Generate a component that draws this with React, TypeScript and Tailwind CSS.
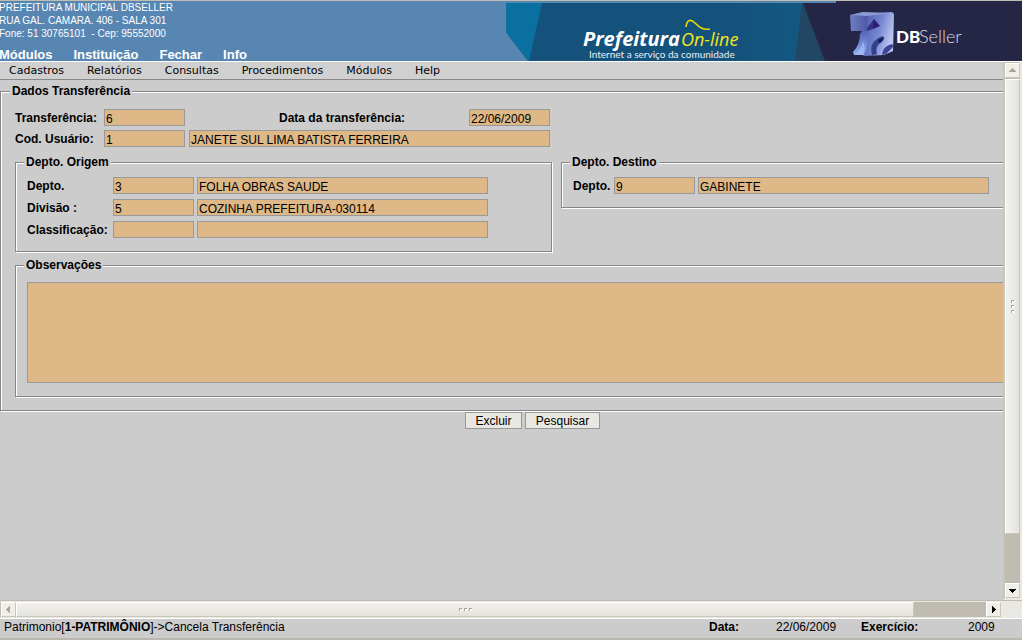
import type { ReactNode } from "react";

const etched =
  "border border-[#868686] shadow-[inset_1px_1px_0_#fff,1px_1px_0_#fff] min-w-0";
const legendStyle = "bg-[#cccccc] px-[2px] text-[12px] leading-[14px] font-bold";
const inputBase =
  "block h-[17px] border border-[#999999] bg-[#deb887] px-px pt-[2px] text-[12px] leading-[14px] text-black outline-none";

function Group({ title, className, children }: { title: string; className: string; children: ReactNode }) {
  return (
    <fieldset className={`${etched} ${className}`}>
      <legend className={legendStyle}>{title}</legend>
      {children}
    </fieldset>
  );
}

function Code({ id, value }: { id: string; value: string }) {
  return <input id={id} className={`${inputBase} w-[81px]`} defaultValue={value} readOnly />;
}

function Description({ label, value, className }: { label: string; value: string; className: string }) {
  return <input aria-label={label} className={`${inputBase} ${className}`} defaultValue={value} readOnly />;
}

function Label({ htmlFor, className, children }: { htmlFor: string; className?: string; children: ReactNode }) {
  return (
    <label htmlFor={htmlFor} className={`h-[17px] shrink-0 text-[12px] leading-[19px] font-bold whitespace-nowrap ${className ?? ""}`}>
      {children}
    </label>
  );
}

function Banner() {
  return (
    <svg className="block h-[60px] w-[516px] shrink-0" viewBox="0 0 516 60" role="img" aria-label="Prefeitura On-line - DBSeller">
      <defs>
        <linearGradient id="sea" x1="0" x2="1">
          <stop offset="0.7" stopColor="#14527b" />
          <stop offset="1" stopColor="#135b86" />
        </linearGradient>
        <linearGradient id="face" x1="0" y1="0" x2="1" y2="0.4">
          <stop offset="0" stopColor="#4a58a8" />
          <stop offset="0.6" stopColor="#7788d2" />
          <stop offset="1" stopColor="#b9c6f0" />
        </linearGradient>
        <linearGradient id="base" x1="0" y1="0" x2="0" y2="1">
          <stop offset="0" stopColor="#4a5ab0" />
          <stop offset="1" stopColor="#93b0ee" />
        </linearGradient>
        <linearGradient id="lid" x1="0" x2="1">
          <stop offset="0" stopColor="#7080c4" />
          <stop offset="1" stopColor="#4a56a2" />
        </linearGradient>
      </defs>
      <path d="M0 2H330V60H22L0 31Z" fill="url(#sea)" />
      <path d="M0 2H36L23 60H22L0 31Z" fill="#0a70a0" />
      <path d="M296 2H303L325 60H289Z" fill="#224765" />
      <path d="M297 2H330V0H516V60H319Z" fill="#252545" />
      <text x="77" y="45" fill="#fff" fontFamily="'Open Sans', sans-serif" fontStyle="italic" fontWeight="700" fontSize="20">
        Prefeitura
      </text>
      <text x="175" y="45" fill="#f5e616" fontFamily="'Open Sans', sans-serif" fontStyle="italic" fontSize="18">
        On-line
      </text>
      <path d="M180 26C181 18 185 18 189 22C194 27 197 29 204 28" fill="none" stroke="#f0d800" strokeWidth="1.6" />
      <text x="83" y="57" fill="#e8f0f6" fontFamily="Lato, sans-serif" fontSize="10">
        Internet a serviço da comunidade
      </text>
      <path d="M358 27L371 30L366 54L348 54L347 51Q354 44 354 33Z" fill="url(#base)" />
      <path d="M357 13L386 11L388 13L387 50L378 54L357 55Q364 44 360 30Z" fill="url(#face)" />
      <path d="M344 14L357 11L362 13L361 30L345 30Z" fill="url(#lid)" />
      <path d="M345 14L357 11L387 12L361 15Z" fill="#8b9ad6" />
      <path d="M368 18L374 25L367 28L362 27Z" fill="#2b1f70" />
      <path d="M361 27L368 18L367 28L361 30Z" fill="#392f8b" />
      <path d="M366 54Q363 43 371 38Q377 33 378 37Q377 41 373 43Q369 47 371 53Z" fill="#35408a" />
      <path d="M372 39L378 36L377 39L373 42Z" fill="#151a50" />
      <path d="M376 54Q377 46 383 44Q388 42 387 46L380 53Z" fill="#3b4594" />
      <path d="M349 53Q356 48 357 40Q360 48 357 54Z" fill="#a6bdf5" opacity="0.7" />
      <text x="390" y="42" fill="#fff" fontFamily="Lato, sans-serif" fontWeight="900" fontSize="17">
        DB
      </text>
      <text x="413" y="42" fill="#dcdce8" fontFamily="Lato, sans-serif" fontWeight="300" fontSize="18">
        Seller
      </text>
    </svg>
  );
}

const bevel = "border border-t-white border-l-white border-r-[#c9c5b9] border-b-[#c9c5b9] bg-[#efeee9]";

function Arrow({ d, label, fill }: { d: string; label: string; fill: string }) {
  return (
    <button type="button" aria-label={label} className={`flex size-[15px] shrink-0 items-center justify-center ${bevel}`}>
      <svg className="size-[9px]" viewBox="0 0 9 9" shapeRendering="crispEdges" aria-hidden="true">
        <path d={d} fill={fill} />
      </svg>
    </button>
  );
}

function Grip() {
  return (
    <>
      {[0, 1, 2].map((dot) => (
        <i key={dot} className="size-[3px] border-t border-l border-[#a9a493] bg-white" />
      ))}
    </>
  );
}

export default function App() {
  return (
    <div className="flex h-screen flex-col overflow-hidden bg-[#cccccc] font-['Liberation_Sans',Arial,sans-serif] text-black">
      <header className="flex shrink-0 justify-between border-t border-b border-t-[#c0bdb2] border-b-white bg-[#5786b2] text-white">
        <div className="-ml-px flex flex-col justify-between whitespace-nowrap">
          <address className="text-[10px] leading-[13px] not-italic">
            PREFEITURA MUNICIPAL DBSELLER
            <br />
            RUA GAL. CAMARA. 406 - SALA 301
            <br />
            Fone: 51 30765101 &nbsp;- Cep: 95552000
          </address>
          <nav className="flex gap-[21px] text-[13px] leading-[12px] font-bold">
            <a href="#modulos">Módulos</a>
            <a href="#instituicao">Instituição</a>
            <a href="#fechar">Fechar</a>
            <a href="#info">Info</a>
          </nav>
        </div>
        <Banner />
      </header>

      <div className="flex min-h-0 flex-1">
        <div className="flex min-w-0 flex-1 flex-col overflow-hidden">
          <nav className="flex h-[18px] shrink-0 gap-[23px] border-b border-[#888888] bg-[#d0d0d0] pl-[9px] font-['DejaVu_Sans',sans-serif] text-[11px] leading-[17px]">
            <a href="#cadastros">Cadastros</a>
            <a href="#relatorios">Relatórios</a>
            <a href="#consultas">Consultas</a>
            <a href="#procedimentos">Procedimentos</a>
            <a href="#menu-modulos">Módulos</a>
            <a href="#help">Help</a>
          </nav>

          <form className="min-w-[1065px] pt-1" onSubmit={(e) => e.preventDefault()}>
            <Group title="Dados Transferência" className="px-[14px] pb-[13px] [&>legend]:-ml-[5px]">
              <div className="flex flex-col gap-1 pt-[11px]">
                <div className="flex">
                  <Label htmlFor="transferencia" className="w-[89px]">Transferência:</Label>
                  <Code id="transferencia" value="6" />
                  <Label htmlFor="data" className="ml-[94px] w-[190px]">Data da transferência:</Label>
                  <Code id="data" value="22/06/2009" />
                </div>
                <div className="flex">
                  <Label htmlFor="usuario" className="w-[89px]">Cod. Usuário:</Label>
                  <Code id="usuario" value="1" />
                  <Description label="Nome do usuário" value="JANETE SUL LIMA BATISTA FERREIRA" className="ml-1 w-[361px]" />
                </div>
              </div>

              <div className="mt-2 flex items-start gap-[9px]">
                <Group title="Depto. Origem" className="w-[537px] px-[11px] pb-[13px] [&>legend]:-ml-[3px]">
                  <div className="flex flex-col gap-[5px] pt-2">
                    <div className="flex gap-[3px]">
                      <Label htmlFor="depto-origem" className="w-[83px]">Depto.</Label>
                      <Code id="depto-origem" value="3" />
                      <Description label="Nome do departamento de origem" value="FOLHA OBRAS SAUDE" className="w-[291px]" />
                    </div>
                    <div className="flex gap-[3px]">
                      <Label htmlFor="divisao" className="w-[83px]">Divisão :</Label>
                      <Code id="divisao" value="5" />
                      <Description label="Nome da divisão" value="COZINHA PREFEITURA-030114" className="w-[291px]" />
                    </div>
                    <div className="flex gap-[3px]">
                      <Label htmlFor="classificacao" className="w-[83px]">Classificação:</Label>
                      <Code id="classificacao" value="" />
                      <Description label="Nome da classificação" value="" className="w-[291px]" />
                    </div>
                  </div>
                </Group>
                <Group title="Depto. Destino" className="flex-1 px-[11px] pb-[13px] [&>legend]:-ml-[3px]">
                  <div className="flex gap-[3px] pt-2">
                    <Label htmlFor="depto-destino" className="w-[38px]">Depto.</Label>
                    <Code id="depto-destino" value="9" />
                    <Description label="Nome do departamento de destino" value="GABINETE" className="w-[291px]" />
                  </div>
                </Group>
              </div>

              <Group title="Observações" className="mt-[6px] px-[11px] pt-[10px] pb-[13px] [&>legend]:-ml-[3px]">
                <textarea aria-label="Observações" readOnly className="block h-[101px] w-full resize-none border border-[#999999] bg-[#deb887] text-[12px] outline-none" />
              </Group>
            </Group>
            <div className="flex justify-center gap-[3px] pt-px text-[12px] leading-[14px]">
              <button type="button" className="h-[17px] w-[57px] border border-[#999999] bg-[#e8e7e1] pt-px">Excluir</button>
              <button type="button" className="h-[17px] w-[75px] border border-[#999999] bg-[#e8e7e1] pt-px">Pesquisar</button>
            </div>
          </form>
        </div>

        <div className="flex w-[19px] shrink-0 flex-col border-r-2 border-b-2 border-l-2 border-r-[#e9e8e3] border-b-[#e9e8e3] border-l-[#c9c5b9] bg-[#c0bbb0] pt-px">
          <Arrow label="Rolar para cima" d="M4 2h1v1h1v1h1v1h1v1H1V5h1V4h1V3h1z" fill="#a9a493" />
          <div className={`mt-px flex grow-[457] basis-0 flex-col items-center justify-center gap-[2px] bg-gradient-to-r from-[#f3f2ee] to-[#e3e2dc] ${bevel}`}>
            <Grip />
          </div>
          <div className="grow-[49] basis-0" />
          <Arrow label="Rolar para baixo" d="M1 3h7v1H7v1H6v1H5v1H4V6H3V5H2V4H1z" fill="#000" />
        </div>
      </div>

      <div className="flex h-[19px] shrink-0 border-t border-b border-t-[#c0bbb0] border-b-white bg-[#e9e8e3]">
        <div className="flex flex-1 border-t border-b border-[#e9e8e3] bg-[#c0bbb0] pl-px">
          <Arrow label="Rolar para a esquerda" d="M6 1v7H5V7H4V6H3V5H2V4h1V3h1V2h1V1z" fill="#a9a493" />
          <div className={`flex grow-[899] basis-0 items-center justify-center gap-[2px] bg-gradient-to-b from-[#f3f2ee] to-[#e3e2dc] ${bevel}`}>
            <Grip />
          </div>
          <div className="grow-[72] basis-0" />
          <Arrow label="Rolar para a direita" d="M3 1h1v1h1v1h1v1h1v1H6v1H5v1H4v1H3z" fill="#000" />
        </div>
        <div className="w-[21px] bg-[#e9e8e3]" />
      </div>

      <footer className="flex h-[21px] shrink-0 items-start border-b-2 border-[#b9b7ae] px-1 text-[12px] leading-[17px] whitespace-nowrap">
        <p className="flex-1">
          Patrimonio[<b>1-PATRIMÔNIO</b>]-&gt;Cancela Transferência
        </p>
        <b className="w-[67px]">Data:</b>
        <span className="w-[85px]">22/06/2009</span>
        <b className="w-[107px]">Exercício:</b>
        <span className="w-[50px]">2009</span>
      </footer>
    </div>
  );
}
